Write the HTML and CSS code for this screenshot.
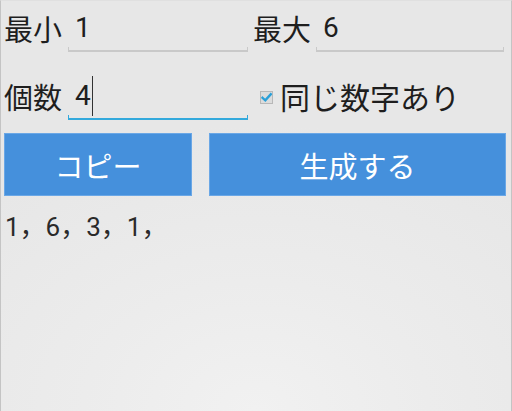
FILE: index.html
```html
<!DOCTYPE html>
<html lang="ja">
<head>
<meta charset="utf-8">
<link rel="stylesheet" href="styles.css">
</head>
<body>
<div class="screen">
  <div class="row row-top">
    <span class="label">最小</span>
    <div class="field f-min"><span class="val">1</span></div>
    <span class="label label-max">最大</span>
    <div class="field f-max"><span class="val">6</span></div>
  </div>
  <div class="row row-second">
    <span class="label">個数</span>
    <div class="field f-count focused"><span class="val">4</span><span class="caret"></span></div>
    <label class="check">
      <span class="box"><svg width="11" height="11" viewBox="0 0 11 11"><path d="M1.5 5.8 L4.3 8.3 L9.8 2.2" fill="none" stroke="#2aa0d8" stroke-width="2.4" stroke-linecap="square"/></svg></span>
      <span class="check-text">同じ数字あり</span>
    </label>
  </div>
  <div class="row row-buttons">
    <button class="btn btn-copy">コピー</button>
    <button class="btn btn-gen">生成する</button>
  </div>
  <div class="result">1，6，3，1，</div>
</div>
</body>
</html>
```

FILE: styles.css
```css
html, body {
  margin: 0;
  padding: 0;
}
body {
  width: 512px;
  height: 411px;
  overflow: hidden;
  font-family: "Noto Sans CJK JP", "Roboto", sans-serif;
  color: #1e1e1e;
}
.screen {
  box-sizing: border-box;
  width: 512px;
  height: 411px;
  border-left: 1px solid #c4c4c4;
  border-right: 1px solid #c4c4c4;
  border-top: 1px solid #e0e0e0;
  background: radial-gradient(ellipse 75% 70% at 50% 100%, #f1f1f1 0%, #ececec 45%, #e7e7e7 100%);
  padding: 3px 0 0 3px;
}
.row {
  display: flex;
  align-items: center;
}
.label {
  font-size: 29px;
  line-height: 48px;
  width: 58px;
  margin-right: 6px;
  white-space: nowrap;
}
.label-max {
  margin-left: 5px;
  margin-right: 5px;
}
.field {
  box-sizing: border-box;
  height: 48px;
  padding-left: 7px;
  display: flex;
  align-items: center;
  background:
    linear-gradient(#c9c9c9, #c9c9c9) left bottom / 1px 5px no-repeat,
    linear-gradient(#c9c9c9, #c9c9c9) right bottom / 1px 5px no-repeat,
    linear-gradient(#c9c9c9, #c9c9c9) left bottom / 100% 2px no-repeat;
}
.field.focused {
  background:
    linear-gradient(#33a9dc, #33a9dc) left bottom / 1px 5px no-repeat,
    linear-gradient(#33a9dc, #33a9dc) right bottom / 1px 5px no-repeat,
    linear-gradient(#33a9dc, #33a9dc) left bottom / 100% 2px no-repeat;
}
.val {
  font-family: "Roboto", sans-serif;
  font-size: 28px;
  line-height: 48px;
}
.f-min, .f-count {
  width: 180px;
}
.f-max {
  width: 188px;
}
.caret {
  width: 1px;
  height: 40px;
  background: #333;
  margin-left: 1px;
}
.row-second {
  margin-top: 20px;
}
.check {
  display: flex;
  align-items: center;
  margin-left: 12px;
}
.box {
  box-sizing: border-box;
  width: 13px;
  height: 13px;
  border: 1px solid #b8b8b8;
  background: #dcdcdc;
  display: flex;
  align-items: center;
  justify-content: center;
  margin-right: 7px;
  margin-top: 2px;
}
.box svg {
  display: block;
}
.check-text {
  font-size: 30px;
  line-height: 48px;
  white-space: nowrap;
}
.row-buttons {
  margin-top: 13px;
  gap: 17px;
}
.btn {
  box-sizing: border-box;
  height: 63px;
  border: 1px solid #6aa7e6;
  background: #4590dc;
  color: #ffffff;
  font-family: "Noto Sans CJK JP", sans-serif;
  font-size: 29px;
  padding: 0;
  margin: 0;
  display: flex;
  align-items: center;
  justify-content: center;
}
.btn-copy {
  width: 188px;
}
.btn-gen {
  width: 297px;
}
.result {
  margin-top: 13px;
  margin-left: 1px;
  font-family: "Roboto", "Noto Sans CJK JP", sans-serif;
  font-size: 26px;
  line-height: 36px;
  color: #2a2a2a;
}
```
